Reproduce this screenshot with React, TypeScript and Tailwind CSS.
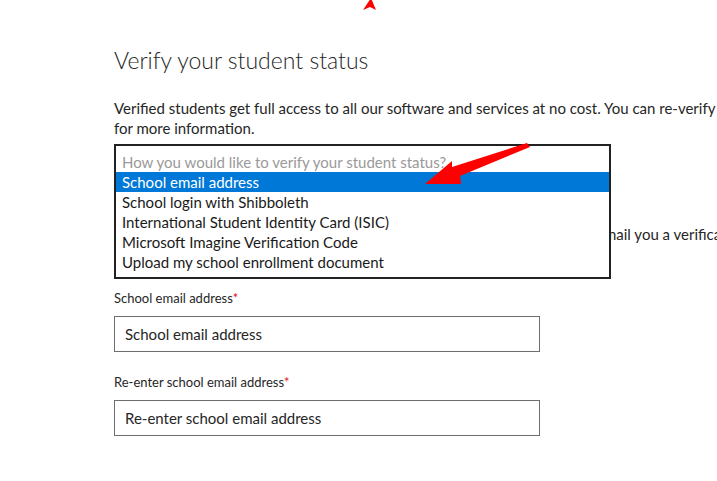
import React from 'react';

const options = [
  'School email address',
  'School login with Shibboleth',
  'International Student Identity Card (ISIC)',
  'Microsoft Imagine Verification Code',
  'Upload my school enrollment document',
];

function Field({ label, placeholder }: { label: string; placeholder: string }) {
  return (
    <div className="flex flex-col">
      <label className="text-[13px] leading-[18px] text-[#262626]">
        {label}
        <span className="text-[#e81123]">*</span>
      </label>
      <div className="mt-[9px] w-[426px] h-[36px] border border-[#6e6e6e] flex items-center px-[10px] text-[15px] text-[#262626]">
        {placeholder}
      </div>
    </div>
  );
}

export default function App() {
  return (
    <div className="relative w-[717px] h-[481px] overflow-hidden bg-white font-['Lato',sans-serif] text-[#262626]">
      <div className="pl-[114px] pt-[44px] whitespace-nowrap">
        <h1 className="text-[23px] leading-[32px] font-light text-[#262626]">Verify your student status</h1>

        <p className="mt-[22px] text-[15px] leading-[20px]">
          Verified students get full access to all our software and services at no cost. You can re-verify your status at any time, see our FAQ
          <br />
          for more information.
        </p>

        <div className="relative mt-[6px]">
          {/* closed select + hint text, covered by the open list */}
          <div className="w-[497px] h-[36px] border-2 border-[#222]" />
          <p className="mt-[44px] text-[15px] leading-[20px]">
            Verify your status: enter the email address your school gave you and we'll email you a verification code.
          </p>

          {/* open list */}
          <div className="absolute left-0 top-0 w-[497px] border-2 border-[#222] bg-white pt-[6px] pb-[5px] text-[15px]">
            <div className="h-[20px] leading-[20px] px-[6px] text-[#9a9a9a]">How you would like to verify your student status?</div>
            {options.map((o, i) => (
              <div
                key={o}
                className={i === 0 ? 'h-[20px] leading-[20px] px-[6px] bg-[#0078d7] text-white' : 'h-[20px] leading-[20px] px-[6px] text-[#1a1a1a]'}
              >
                {o}
              </div>
            ))}
          </div>
        </div>

        <div className="mt-[45px] flex flex-col gap-[21px]">
          <Field label="School email address" placeholder="School email address" />
          <Field label="Re-enter school email address" placeholder="Re-enter school email address" />
        </div>
      </div>

      {/* annotation arrows */}
      <svg className="absolute left-0 top-0 pointer-events-none" width="717" height="481" viewBox="0 0 717 481">
        <polygon points="371,-2 376,10 370,7 363,10" fill="#ff0000" />
        <polygon points="527,143 530,147 460,176 461,184 425,184 452,161 452,167" fill="#ff0000" />
      </svg>
    </div>
  );
}
